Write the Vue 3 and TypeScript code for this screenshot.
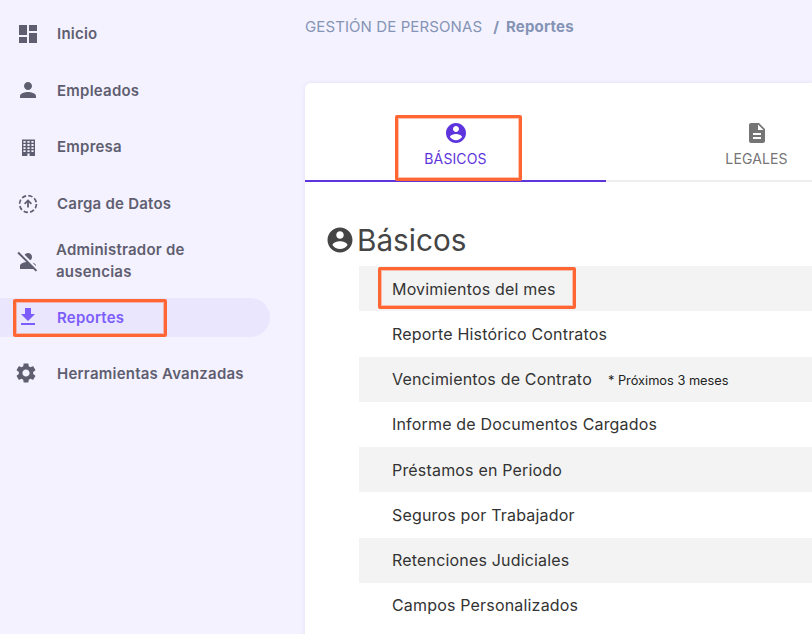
<script setup lang="ts">
const account = 'M12 2C6.48 2 2 6.48 2 12s4.48 10 10 10 10-4.48 10-10S17.52 2 12 2zm0 3c1.66 0 3 1.34 3 3s-1.34 3-3 3-3-1.34-3-3 1.34-3 3-3zm0 14.2c-2.5 0-4.71-1.28-6-3.22.03-1.99 4-3.08 6-3.08 1.99 0 5.97 1.09 6 3.08-1.29 1.94-3.5 3.22-6 3.22z'
const doc = 'M14 2H6c-1.1 0-1.99.9-1.99 2L4 20c0 1.1.89 2 1.99 2H18c1.1 0 2-.9 2-2V8l-6-6zm2 16H8v-2h8v2zm0-4H8v-2h8v2zm-3-5V3.5L18.5 9H13z'
const building = 'M6 4.5h13V21h-5.4v-2.4h-2.2V21H6zM7.4 6v1.8h2.2V6zm4 0v1.8h2.2V6zm4 0v1.8h2.2V6zM7.4 9.1v1.8h2.2V9.1zm4 0v1.8h2.2V9.1zm4 0v1.8h2.2V9.1zM7.4 12.2V14h2.2v-1.8zm4 0V14h2.2v-1.8zm4 0V14h2.2v-1.8zM7.4 15.3v1.8h2.2v-1.8zm4 0v1.8h2.2v-1.8zm4 0v1.8h2.2v-1.8z'
const nav = [
  { label: 'Inicio', d: 'M3 13h8V3H3v10zm0 8h8v-6H3v6zm10 0h8V11h-8v10zm0-18v6h8V3h-8z' },
  { label: 'Empleados', d: 'M12 12c2.21 0 4-1.79 4-4s-1.79-4-4-4-4 1.79-4 4 1.79 4 4 4zm0 2c-2.67 0-8 1.34-8 4v2h16v-2c0-2.66-5.33-4-8-4z' },
  { label: 'Empresa', d: building },
  { label: 'Carga de Datos', d: '', upload: true },
  { label: 'Administrador de ausencias', d: 'M8.65 5.82C9.36 4.72 10.6 4 12 4c2.21 0 4 1.79 4 4 0 1.4-.72 2.64-1.82 3.35L8.65 5.82zM20 17.17c-.02-1.1-.63-2.11-1.61-2.62-.54-.28-1.13-.54-1.77-.76L20 17.17zm1.19 4.02L2.81 2.81 1.39 4.22l8.89 8.89c-1.81.23-3.39.79-4.67 1.45C4.61 15.07 4 16.1 4 17.22V20h13.17l2.61 2.61 1.41-1.42z', wrap: true },
  { label: 'Reportes', d: 'M19 9h-4V3H9v6H5l7 7 7-7zM5 18v2h14v-2H5z', active: true },
  { label: 'Herramientas Avanzadas', d: 'M19.14 12.94c.04-.3.06-.61.06-.94 0-.32-.02-.64-.07-.94l2.03-1.58c.18-.14.23-.41.12-.61l-1.92-3.32c-.12-.22-.37-.29-.59-.22l-2.39.96c-.5-.38-1.03-.7-1.62-.94l-.36-2.54c-.04-.24-.24-.41-.48-.41h-3.84c-.24 0-.43.17-.47.41l-.36 2.54c-.59.24-1.13.57-1.62.94l-2.39-.96c-.22-.08-.47 0-.59.22L2.74 8.87c-.12.21-.08.47.12.61l2.03 1.58c-.05.3-.09.63-.09.94s.02.64.07.94l-2.03 1.58c-.18.14-.23.41-.12.61l1.92 3.32c.12.22.37.29.59.22l2.39-.96c.5.38 1.03.7 1.62.94l.36 2.54c.05.24.24.41.48.41h3.84c.24 0 .44-.17.47-.41l.36-2.54c.59-.24 1.13-.56 1.62-.94l2.39.96c.22.08.47 0 .59-.22l1.92-3.32c.12-.22.07-.47-.12-.61l-2.01-1.58zM12 15.6c-1.98 0-3.6-1.62-3.6-3.6s1.62-3.6 3.6-3.6 3.6 1.62 3.6 3.6-1.62 3.6-3.6 3.6z', gear: true },
]
const rows = [
  { label: 'Movimientos del mes' },
  { label: 'Reporte Histórico Contratos' },
  { label: 'Vencimientos de Contrato', note: '* Próximos 3 meses' },
  { label: 'Informe de Documentos Cargados' },
  { label: 'Préstamos en Periodo' },
  { label: 'Seguros por Trabajador' },
  { label: 'Retenciones Judiciales' },
  { label: 'Campos Personalizados' },
]
</script>

<template>
  <div class="page">
    <aside class="side">
      <a v-for="n in nav" :key="n.label" class="nav" :class="{ active: n.active, wrap: n.wrap, gear: n.gear }">
        <svg class="nav-icon" viewBox="0 0 24 24" aria-hidden="true">
          <template v-if="n.upload">
            <circle cx="12" cy="13" r="8.4" fill="none" stroke="currentColor" stroke-width="1.7" stroke-dasharray="4.4 2.2" />
            <path d="M12 8.2l-4 4 1.2 1.2 1.9-1.9v5h1.8v-5l1.9 1.9 1.2-1.2z" fill="currentColor" />
          </template>
          <path v-else :d="n.d" fill="currentColor" fill-rule="evenodd" />
        </svg>
        <span class="nav-label">{{ n.label }}</span>
      </a>
    </aside>
    <main class="main">
      <div class="crumbs"><span class="crumb-root">GESTIÓN DE PERSONAS</span><b class="crumb-cur">/ Reportes</b></div>
      <section class="card">
        <div class="tabs">
          <div class="tab on">
            <svg viewBox="0 0 24 24" class="tab-icon" aria-hidden="true"><path :d="account" fill="currentColor" /></svg>
            <span>BÁSICOS</span>
          </div>
          <div class="tab">
            <svg viewBox="0 0 24 24" class="tab-icon" aria-hidden="true"><path :d="doc" fill="currentColor" /></svg>
            <span>LEGALES</span>
          </div>
        </div>
        <h1 class="title">
          <svg viewBox="0 0 24 24" class="title-icon" aria-hidden="true"><path :d="account" fill="currentColor" /></svg>
          Básicos
        </h1>
        <ul class="list">
          <li v-for="r in rows" :key="r.label" class="row">
            <span>{{ r.label }}</span>
            <small v-if="r.note" class="note">{{ r.note }}</small>
          </li>
        </ul>
      </section>
    </main>
    <i class="mark mark-nav"></i>
    <i class="mark mark-tab"></i>
    <i class="mark mark-row"></i>
  </div>
</template>

<style scoped>
.page {
  position: relative;
  display: flex;
  width: 812px;
  height: 634px;
  overflow: hidden;
  background: #f4f2ff;
  font-family: Inter, "Liberation Sans", sans-serif;
}
.side {
  flex: none;
  width: 305px;
  padding-top: 14px;
  box-sizing: border-box;
  display: flex;
  flex-direction: column;
  gap: 17.6px;
}
.nav {
  display: flex;
  align-items: center;
  width: 270px;
  height: 39px;
  padding-left: 16px;
  box-sizing: border-box;
  border-radius: 0 20px 20px 0;
  color: #5f5e70;
  font-size: 15px;
  font-weight: 600;
  letter-spacing: .23px;
}
.nav.active {
  background: #eae6fe;
  color: #7c5dfa;
}
.nav.wrap { margin-top: 1px; }
.nav.gear { margin-top: -1px; }
.nav-icon {
  flex: none;
  width: 24px;
  height: 24px;
  margin-right: 17px;
}
.nav.wrap .nav-icon { margin-right: 16px; }
.nav.gear .nav-icon { margin: 0 19px 0 -2px; }
.nav.wrap .nav-label {
  width: 170px;
  line-height: 22px;
}
.main {
  flex: none;
  width: 507px;
}
.crumbs {
  height: 83px;
  padding-top: 18px;
  box-sizing: border-box;
  line-height: 18px;
  font-size: 15px;
  letter-spacing: .1px;
  color: #8594b5;
}
.crumb-root { font-weight: 400; }
.crumb-cur {
  margin-left: 11px;
  font-weight: 700;
  letter-spacing: .2px;
  word-spacing: 3px;
}
.card {
  height: 600px;
  background: #fff;
  border-radius: 6px 0 0 0;
  box-shadow: 0 0 4px rgba(120, 110, 170, .14);
}
.tabs {
  display: flex;
  height: 99px;
  padding-top: 27px;
  box-sizing: border-box;
  border-bottom: 2px solid #eeeeee;
}
.tab {
  flex: none;
  width: 301px;
  height: 72px;
  margin-bottom: -2px;
  padding-top: 11px;
  box-sizing: border-box;
  display: flex;
  flex-direction: column;
  align-items: center;
  gap: 4px;
  font-size: 14px;
  font-weight: 400;
  letter-spacing: .12px;
  line-height: 20px;
  color: #757575;
}
.tab.on {
  color: #5e35dc;
  border-bottom: 2px solid #5e35dc;
}
.tab-icon {
  width: 24px;
  height: 24px;
}
.title {
  display: flex;
  align-items: center;
  gap: 2px;
  margin: 0;
  padding: 32px 0 0 20px;
  height: 84px;
  box-sizing: border-box;
  font-size: 29.7px;
  font-weight: 400;
  line-height: 36px;
  color: #454545;
}
.title-icon {
  width: 30px;
  height: 30px;
}
.list {
  list-style: none;
  margin: 0;
  padding: 0 0 0 54px;
}
.row {
  display: flex;
  align-items: center;
  height: 45.25px;
  padding-left: 33px;
  font-size: 16px;
  letter-spacing: .18px;
  color: #333;
}
.row:nth-child(odd) { background: #f3f3f3; }
.note {
  margin: 2px 0 0 16px;
  font-size: 12.8px;
  letter-spacing: 0;
  color: #222;
}
.mark {
  position: absolute;
  box-sizing: border-box;
  border: 3px solid #ff6633;
  border-radius: 2px;
  box-shadow: inset 0 0 0 1px rgba(255, 120, 70, .45);
}
.mark-nav { left: 13px; top: 299px; width: 154px; height: 38px; }
.mark-tab { left: 395px; top: 115px; width: 127px; height: 66px; }
.mark-row { left: 378px; top: 267px; width: 198px; height: 42px; }
</style>
